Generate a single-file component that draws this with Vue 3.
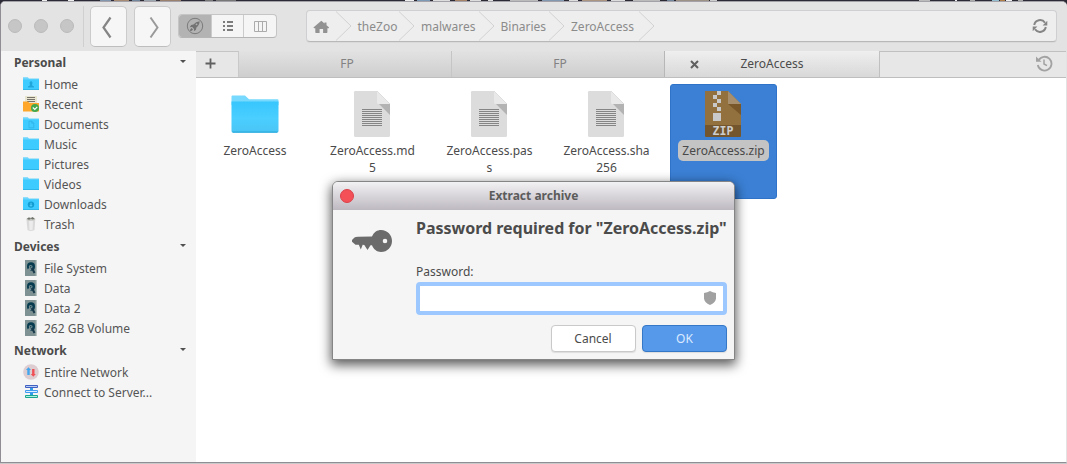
<script setup>
const groups = [
  { name: 'Personal', items: [
    { label: 'Home', icon: 'folder', mark: 'user' },
    { label: 'Recent', icon: 'recent' },
    { label: 'Documents', icon: 'folder', mark: 'doc' },
    { label: 'Music', icon: 'folder' },
    { label: 'Pictures', icon: 'folder' },
    { label: 'Videos', icon: 'folder' },
    { label: 'Downloads', icon: 'folder', mark: 'down' },
    { label: 'Trash', icon: 'trash' },
  ] },
  { name: 'Devices', items: [
    { label: 'File System', icon: 'disk' },
    { label: 'Data', icon: 'disk' },
    { label: 'Data 2', icon: 'disk' },
    { label: '262 GB Volume', icon: 'disk' },
  ] },
  { name: 'Network', items: [
    { label: 'Entire Network', icon: 'network' },
    { label: 'Connect to Server...', icon: 'server' },
  ] },
]
const crumbs = [
  { label: 'theZoo', width: 63.5 },
  { label: 'malwares', width: 79.5 },
  { label: 'Binaries', width: 70.5 },
  { label: 'ZeroAccess', width: 89.5 },
]
const files = [
  { kind: 'folder', lines: ['ZeroAccess'] },
  { kind: 'text', lines: ['ZeroAccess.md', '5'] },
  { kind: 'text', lines: ['ZeroAccess.pas', 's'] },
  { kind: 'text', lines: ['ZeroAccess.sha', '256'] },
  { kind: 'zip', lines: ['ZeroAccess.zip'] },
]
const specks = [[42, 5, '#eee'], [68, 6, '#eee'], [100, 11, '#8297ad'], [114, 15, '#a58c72'], [132, 8, '#72869c'], [144, 12, '#9aa5ae'], [160, 21, '#99816d'], [205, 8, '#777'], [216, 20, '#777'], [405, 9, '#eee'], [417, 13, '#7c9ab5'], [433, 17, '#ddd'], [455, 12, '#a58468'], [470, 11, '#ddd'], [488, 5, '#ddd'], [510, 28, '#bbb'], [542, 22, '#8298b0'], [569, 9, '#ddd'], [582, 25, '#ac9580'], [611, 14, '#ddd'], [633, 27, '#bbb'], [667, 7, '#72869c'], [676, 33, '#9c9286'], [710, 7, '#ccc'], [919, 11, '#bbb'], [955, 2, '#eee'], [970, 5, '#aaa'], [992, 7, '#93bed0'], [1000, 5, '#b07d45'], [1006, 6, '#eee'], [1018, 5, '#aaa']]
</script>

<template>
  <div class="desktop">
    <svg class="backdrop" width="1067" height="8">
      <rect v-for="s in specks" :key="s[0]" :x="s[0]" y="0" :width="s[1]" height="1" :fill="s[2]" />
    </svg>
    <div class="window">
      <header class="toolbar">
        <div class="lights"><i></i><i></i><i></i></div>
        <div class="nav">
          <button class="nav-btn"><svg width="35" height="38"><path d="M19.500 9.500 12.500 19.500 19.500 29.500" fill="none" stroke="#858585" stroke-width="2.200" /></svg></button>
          <button class="nav-btn"><svg width="35" height="38"><path d="M15.500 9.500 22.500 19.500 15.500 29.500" fill="none" stroke="#9a9a9a" stroke-width="2" /></svg></button>
        </div>
        <div class="views">
          <span class="view on">
            <svg width="18" height="18" viewBox="0 0 18 18"><circle cx="9" cy="9" r="7.700" fill="none" stroke="#7b7b7b" /><path d="M13.600 4.200Q9.700 4.500 7.500 7.600L5.200 8 3.700 10.200 6.200 10 8 11.900 7.900 14.300 10 12.800 10.400 10.500Q13.500 8.200 13.600 4.200ZM5.600 11Q3.900 12 4 14 6 14.100 7 12.500Z" fill="#737373" /><circle cx="10.500" cy="7.300" r=".9" fill="#b0b0b0" /></svg>
          </span>
          <span class="view">
            <svg width="12" height="12"><path d="M1 2H3M1 6H3M1 10H3M5 2H11M5 6H11M5 10H11" stroke="#7c7c7c" stroke-width="2" /></svg>
          </span>
          <span class="view">
            <svg width="13" height="11"><path d="M.5 .5H12.500V10.500H.5ZM4.500 .5V10.500M8.500 .5V10.500" fill="none" stroke="#ababab" /></svg>
          </span>
        </div>
        <nav class="path">
          <div class="crumb home">
            <svg class="house" width="17" height="14" viewBox="0 0 17 14"><path d="M8.300 .8 .4 7.400 1.200 8.200H2.300V12.300Q2.300 13 3 13H6.600V9H10.100V13H13.600Q14.400 13 14.400 12.300V8.200H15.500L16.200 7.400 13.500 5.200V2.500H11.500V3.500Z" fill="#929292" /></svg>
            <svg class="sep" width="16" height="30"><path d="M0 .5 15 15 0 29.500" fill="none" stroke="#d2d2d4" /></svg>
          </div>
          <div v-for="c in crumbs" :key="c.label" class="crumb" :style="{ width: c.width + 'px' }">
            <span>{{ c.label }}</span>
            <svg class="sep" width="16" height="30"><path d="M0 .5 15 15 0 29.500" fill="none" stroke="#d2d2d4" /></svg>
          </div>
          <svg class="reload" width="16" height="16" viewBox="0 0 16 16"><path d="M2.200 7A6 6 0 0 1 13 4.700M13.800 9A6 6 0 0 1 3 11.300" fill="none" stroke="#858585" stroke-width="2" /><path d="M15.300 2.700V7.400H10.600ZM.7 13.300V8.600H5.400Z" fill="#858585" /></svg>
        </nav>
      </header>
      <div class="body">
        <aside>
          <section v-for="g in groups" :key="g.name">
            <h3 :class="{ first: g.name === 'Personal' }">{{ g.name }}<i class="arrow"></i></h3>
            <div v-for="it in g.items" :key="it.label" class="row">
              <svg width="16" height="16" viewBox="0 0 16 16">
                <g v-if="it.icon === 'folder'">
                  <path d="M0 1.300H4.800L6 2.500H16V7H0Z" fill="#6dd5fc" />
                  <path d="M0 3.500H16V14H0Z" fill="#3ecbff" />
                  <path d="M0 13.200H16V14H0Z" fill="#2daee0" />
                  <path v-if="it.mark === 'user'" d="M5 11.500V10.500L7 9.200Q5.800 5.500 8 5.300 10.200 5.500 9 9.200L11 10.500V11.500Z" fill="#21a6dc" />
                  <path v-if="it.mark === 'doc'" d="M6 5.200H8.800L10.800 7.200V11.800H6ZM8.800 5.200V7.200H10.800" fill="none" stroke="#2eb2e5" stroke-width=".8" />
                  <g v-if="it.mark === 'down'"><circle cx="8" cy="8.600" r="3.200" fill="#139dd2" /><path d="M8 6.800V10.200M6.800 9 8 10.300 9.200 9" fill="none" stroke="#55cffb" /></g>
                </g>
                <g v-if="it.icon === 'recent'">
                  <path d="M2 0H14V8H2Z" fill="#e7e5cf" /><path d="M4 1.500H12M4 3.500H12M4 5.500H12" stroke="#77736a" />
                  <path d="M0 5.500H5L6.500 7H16V15.500H0Z" fill="#ffa72b" /><circle cx="12" cy="12" r="4" fill="#43a84c" /><path d="M9.800 11.500 11.800 13.400 14.300 10.900" fill="none" stroke="#fff" stroke-width="1.200" />
                </g>
                <g v-if="it.icon === 'trash'">
                  <path d="M3.400 3H12.300L11.500 14Q7.900 15.800 4.500 14Z" fill="#d9d9d9" /><path d="M6 5 6.500 14H9.500L10 5Z" fill="#ececec" /><ellipse cx="7.900" cy="3" rx="4.300" ry="1.500" fill="#c4c5c0" /><path d="M4 2.800 6 1.200 7.500 2.500 9.500 1 11.500 2.500 10 3.500 8 2.800 6 3.800Z" fill="#6f746b" />
                </g>
                <g v-if="it.icon === 'disk'">
                  <path d="M2 0H14V16H2Z" fill="#7e9293" /><path d="M12.700 0H14V16H12.700Z" fill="#b7c4c2" /><ellipse cx="8" cy="6.500" rx="4" ry="4.200" fill="#073c50" /><circle cx="7.700" cy="6.800" r="1.900" fill="#6f8b90" /><circle cx="7.700" cy="6.800" r=".7" fill="#0a3d50" /><path d="M9 8 11.500 13" stroke="#17394a" stroke-width="2" /><path d="M4.500 11.500 7.500 8.500" stroke="#7e9293" stroke-width="2.600" />
                </g>
                <g v-if="it.icon === 'network'">
                  <circle cx="8" cy="8" r="7.800" fill="#ddcdd1" /><path d="M5.500 3.300 8 6H6.700V11H4.300V6H3Z" fill="#42a5ed" /><path d="M10.300 12.700 7.800 10H9.100V5H11.500V10H12.800Z" fill="#f05055" />
                </g>
                <g v-if="it.icon === 'server'">
                  <path d="M7 2H10V13H7Z" fill="#319ce6" /><path d="M2.500 1.500H14.500V3.500H2.500Z" fill="#b7cdf3" stroke="#405fc3" /><path d="M2.500 6.500H14.500V8.500H2.500Z" fill="#dcf1ff" stroke="#409bf0" /><path d="M2.500 11.500H14.500V13.500H2.500Z" fill="#b5eee3" stroke="#17a78e" />
                </g>
              </svg>
              <span>{{ it.label }}</span>
            </div>
          </section>
        </aside>
        <main>
          <div class="tabs">
            <div class="plus"><svg width="11" height="11"><path d="M.5 5.500H10.500M5.500 .5V10.500" stroke="#606060" stroke-width="1.800" /></svg></div>
            <div class="tab">FP</div>
            <div class="tab second">FP</div>
            <div class="tab active"><svg class="close" width="9" height="9"><path d="M1 1 8 8M8 1 1 8" stroke="#606060" stroke-width="2" /></svg>ZeroAccess</div>
            <div class="rest"><svg width="18" height="17" viewBox="0 0 18 17"><path d="M3.600 5.200A6.900 6.900 0 1 1 2.800 10" fill="none" stroke="#a2a2a2" stroke-width="1.800" /><path d="M1 1.600V6.700H6.500Z" fill="#a2a2a2" /><path d="M9 4.500V9L12 10.700" fill="none" stroke="#a2a2a2" stroke-width="1.500" /></svg></div>
          </div>
          <div class="files">
            <div v-for="f in files" :key="f.lines[0]" class="file" :class="[f.kind, { selected: f.kind === 'zip' }]">
              <svg class="thumb" width="48" height="48" viewBox="0 0 48 48">
                <defs>
                  <linearGradient id="folderFace" x1="0" y1="0" x2="0" y2="1"><stop offset="0" stop-color="#37c6fd" /><stop offset=".55" stop-color="#4acfff" /><stop offset="1" stop-color="#4ac5f4" /></linearGradient>
                </defs>
                <g v-if="f.kind === 'folder'">
                  <path d="M.5 6.500Q.5 5.500 1.500 5.500H14L18 9.200H46.500Q47.500 9.200 47.500 10.200V15H.5Z" fill="#76d9fd" />
                  <path d="M.5 11.500H47.500V41Q47.500 42.500 46 42.500H2Q.5 42.500 .5 41Z" fill="url(#folderFace)" /><path d="M.8 41.500H47.200L46 42.700H2Z" fill="#28a9dc" />
                </g>
                <g v-if="f.kind === 'text'">
                  <path d="M6 2.200Q6 1 7.200 1H29L42 14V45.500Q42 47 40.500 47H7.500Q6 47 6 45.500Z" fill="#dcdcdc" /><path d="M29 1 42 14V25L29 12Z" fill="#b3b3b3" /><path d="M29 1 42 14H30.500Q29 14 29 12.500Z" fill="#e9e9e9" />
                  <path d="M14 19.500H34M14 21.500H34M14 23.500H34M14 25.500H34M14 27.500H34M14 29.500H34M14 31.500H34M14 33.500H34M14 35.500H34" stroke="#858585" />
                </g>
                <g v-if="f.kind === 'zip'">
                  <path d="M6 1H29L42 14V45.500Q42 47 40.500 47H7.500Q6 47 6 45.500Z" fill="#93713e" /><path d="M29 14 42 25V14Z" fill="#795729" /><path d="M29 1 42 14H29Z" fill="#a78e6d" /><path d="M6 35H42V45.500Q42 47 40.500 47H7.500Q6 47 6 45.500Z" fill="#73562e" />
                  <path d="M18 1h4v4h-4zM14 5h4v4h-4zM18 9h4v4h-4zM14 13h4v4h-4zM18 17h4v4h-4zM14 23h8v8h-8z" fill="#c9c9c9" />
                  <text x="24" y="45" text-anchor="middle" fill="#cecece" font-family="DejaVu Sans Mono, monospace" font-weight="700" font-size="11.500">ZIP</text>
                </g>
              </svg>
              <div class="name"><div v-for="l in f.lines" :key="l">{{ l }}</div></div>
            </div>
          </div>
        </main>
      </div>
    </div>
    <div class="dialog">
      <div class="titlebar"><i class="red"></i>Extract archive</div>
      <svg class="key" width="40" height="24" viewBox="0 0 40 24"><path fill-rule="evenodd" d="M20 7.500C22 3 25.300 1 29 1 35.500 1 40 6 40 12S35.500 23 29 23C24.800 23 21.600 20.300 20 16.300H18.500L15.500 21 12.300 16 10.700 15.800 8.800 20.500 6.800 15.800H3.500L0 12.800V11L2.500 8.500Q3.500 7.700 6 7.700ZM33 9.700A2.300 2.300 0 1 0 33 14.300 2.300 2.300 0 1 0 33 9.700" fill="#6b6b6b" /></svg>
      <div class="form">
        <h2>Password required for "ZeroAccess.zip"</h2>
        <label>Password:</label>
        <div class="input"><svg width="12" height="14"><path d="M0 2Q3.500 1.600 6 0 8.500 1.600 12 2V7.500Q11.500 11.700 6 14 .5 11.700 0 7.500Z" fill="#a1a1a1" /></svg></div>
        <div class="actions"><button class="cancel">Cancel</button><button class="ok">OK</button></div>
      </div>
    </div>
  </div>
</template>

<style>
html, body { margin: 0; overflow: hidden; }
</style>

<style scoped>
* { box-sizing: border-box; }
.desktop { position: relative; width: 1067px; height: 464px; background: #2c2a34; overflow: hidden; font: 12px/17px "Noto Sans", sans-serif; color: #4b4b4b; border-bottom: 1px solid #c9c9c9; }
.backdrop { position: absolute; left: 0; top: 0; }
button { font: inherit; padding: 0; margin: 0; }
svg { display: block; flex: none; }
.window { position: absolute; left: 0; top: 1px; width: 1067px; height: 462px; border: 1px solid #918d95; border-right-color: #e3e3e3; border-top-color: #a4a2a8; border-radius: 5px 5px 0 0; background: #fff; overflow: hidden; }
.toolbar { height: 49px; background: #e3e3e3; display: flex; align-items: flex-start; }
.lights { display: flex; gap: 12px; width: 83px; height: 41px; margin-top: 4px; padding: 13px 0 0 7px; border-right: 1px solid #d0d0d0; }
.lights i { width: 14px; height: 14px; border-radius: 50%; background: #c6c6c6; border: 1px solid #bbb; }
.nav { display: flex; gap: 7px; margin: 4px 0 0 6px; }
.nav-btn { width: 37px; height: 41px; background: #f6f6f6; border: 1px solid #cbcbcb; border-bottom-color: #bebebe; border-radius: 5px; }
.views { display: flex; margin: 12px 0 0 7px; width: 99px; height: 24px; border: 1px solid #c5c5c5; border-bottom-color: #b5b5b5; border-radius: 4px; overflow: hidden; background: #f5f5f5; }
.view { flex: 1; display: flex; align-items: center; justify-content: center; border-left: 1px solid #cbcbcb; }
.view.on { background: #b3b3b3; border-left: 0; }
.path { display: flex; position: relative; width: 751px; height: 32px; margin: 8px 0 0 29px; border: 1px solid #cfcfd1; border-bottom: 1px solid #b8b8b8; border-radius: 4px; background: #eee; color: #8b8b8b; box-shadow: 0 1px #dadada; }
.crumb { position: relative; display: flex; align-items: center; justify-content: flex-start; }
.crumb span { padding-left: 22px; padding-top: 1px; white-space: nowrap; }
.crumb.home { width: 28.500px; }
.house { margin-left: 6px; margin-top: 2px; }
.sep { position: absolute; left: 100%; top: 0; }
.reload { margin: 7px 8px 0 auto; }
.body { display: flex; height: 411px; }
aside { width: 195px; background: #f5f5f5; }
h3 { height: 24px; margin: 0; padding: 0 10px 0 13px; display: flex; align-items: center; justify-content: space-between; font-size: 12px; font-weight: 700; }
h3.first { height: 23px; }
.arrow { border: 3px solid transparent; border-top-color: #505050; border-bottom: 0; margin-top: -2px; }
.row { display: flex; align-items: center; height: 20px; padding-left: 22px; gap: 5px; color: #555; white-space: nowrap; }
main { flex: 1; background: #fff; }
.tabs { display: flex; height: 27px; border-bottom: 1px solid #bebebe; color: #828282; }
.plus { width: 42px; padding: 6px 0 0 9px; background: #e7e7e7; border-top: 1px solid #c5c5c5; }
.tab { display: flex; align-items: center; justify-content: center; width: 213px; padding: 0 0 1px 4px; background: linear-gradient(#e2e2e2, #cecece); border-left: 1px solid #c5c5c5; }
.tab:not(.second):not(.active) { border-left-color: #c9c9c9; }
.tab.active { position: relative; width: 215px; padding-left: 0; color: #4b4b4b; background: linear-gradient(#efefef, #d8d8d8); border-left-color: #b7b7b7; }
.close { position: absolute; left: 25px; top: 9px; }
.rest { flex: 1; display: flex; justify-content: flex-end; padding: 3px 13px 0 0; background: #e7e7e7; border: solid #c0c0c0; border-width: 1px 0 0 1px; }
.files { display: flex; gap: 10px; padding: 6px 0 0 6px; }
.file { width: 107px; height: 115px; display: flex; flex-direction: column; align-items: center; padding-top: 6px; }
.thumb { margin-left: -1px; }
.file.folder { padding-right: 1px; }
.file.selected { background: #3b80d5; border: 1px solid #2e73c8; border-radius: 3px; padding-top: 5px; }
.name { text-align: center; margin-top: 4px; padding: 0 4px; white-space: nowrap; }
.selected .name { margin-top: 2px; height: 21px; padding-top: 2px; background: #c4c4c4; border-radius: 5px; color: #494949; }
.dialog { position: absolute; left: 332px; top: 181px; width: 403px; height: 179px; background: #f5f5f5; border: 1px solid #858585; border-radius: 6px 6px 0 0; box-shadow: 0 4px 12px 1px rgba(0,0,0,.65); }
.titlebar { position: relative; display: flex; justify-content: center; align-items: center; height: 28px; padding-bottom: 2px; font-weight: 700; color: #5c5c5c; background: linear-gradient(#f2f1f3, #beb9c1); border-radius: 5px 5px 0 0; }
.red { position: absolute; left: 7px; top: 7px; width: 14px; height: 14px; border-radius: 50%; background: #f35058; border: 1px solid #dc4149; }
.key { position: absolute; left: 19px; top: 47px; }
.form { margin-left: 83px; width: 311px; }
h2 { margin: 7px 0 0; font-size: 16px; line-height: 22px; font-weight: 700; white-space: nowrap; letter-spacing: -.02px; }
label { display: block; margin-top: 24px; height: 19px; }
.input { display: flex; justify-content: flex-end; height: 33px; padding: 5px 7px 0; background: #fff; border: 4px solid #9dc8ff; border-radius: 4px; }
.actions { display: flex; justify-content: flex-end; gap: 6px; margin-top: 10px; }
.actions button { width: 85px; height: 27px; border: 1px solid #c9c9c9; border-radius: 4px; background: #fff; color: #4b4b4b; box-shadow: 0 1px 1px #ddd; }
.actions .cancel { padding-right: 1px; }
.actions .ok { background: #5699ea; border-color: #3478c7; color: #dceaff; }
</style>
